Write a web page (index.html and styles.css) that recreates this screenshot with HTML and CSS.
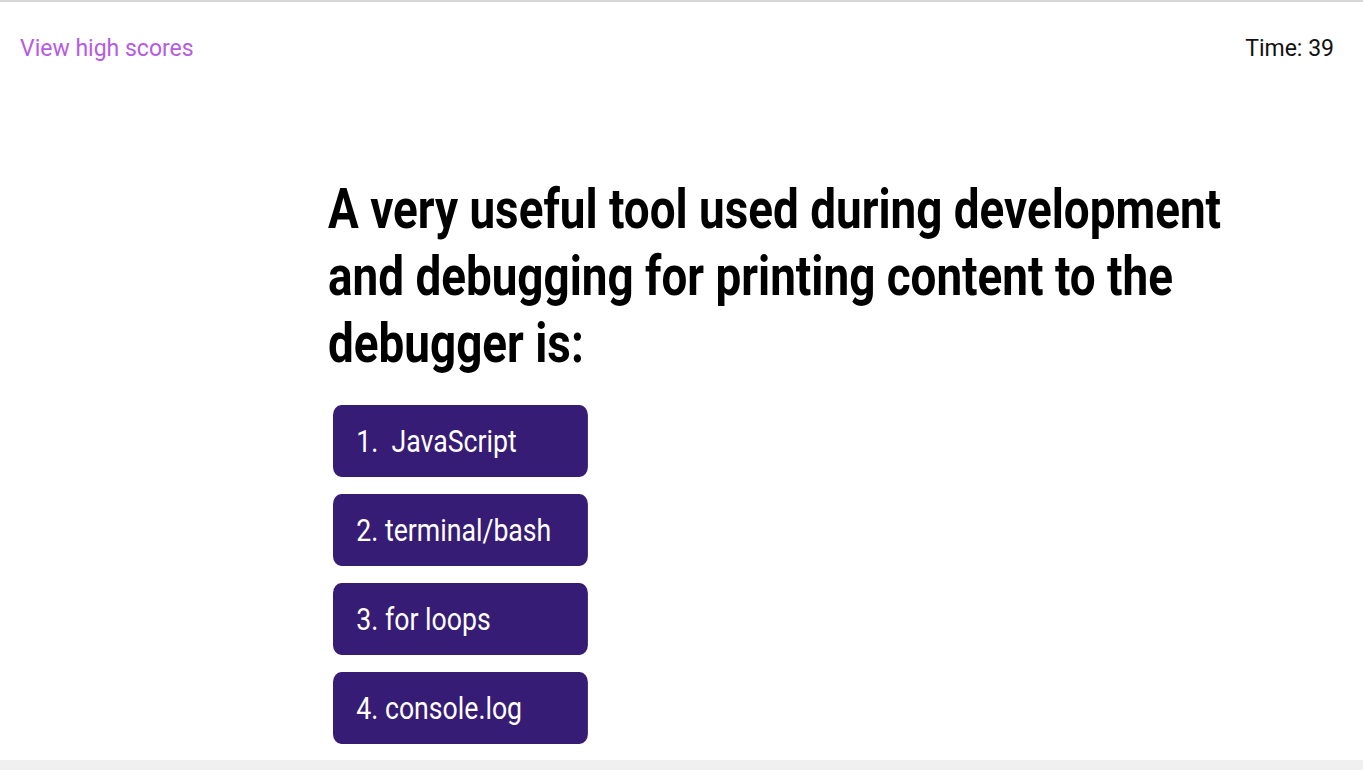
FILE: index.html
```html
<!DOCTYPE html>
<html lang="en">
<head>
<meta charset="utf-8">
<title>Code Quiz</title>
<link rel="stylesheet" href="styles.css">
</head>
<body>
<div class="page">
  <header class="topbar">
    <a class="scores-link" href="#">View high scores</a>
    <div class="timer">Time: 39</div>
  </header>
  <main class="quiz">
    <h1 class="question">A very useful tool used during development and debugging for printing content to the debugger is:</h1>
    <div class="answers">
      <button class="answer">1.&nbsp; JavaScript</button>
      <button class="answer">2. terminal/bash</button>
      <button class="answer">3. for loops</button>
      <button class="answer">4. console.log</button>
    </div>
  </main>
</div>
</body>
</html>
```

FILE: styles.css
```css
html {
  background: #f0f0f0;
}
html, body {
  margin: 0;
  padding: 0;
}
body {
  font-family: Roboto, "Liberation Sans", sans-serif;
  overflow: hidden;
  width: 1363px;
  height: 770px;
}
.page {
  width: 1363px;
  height: 760px;
  background: #ffffff;
  border-top: 2px solid #d6d6d6;
  box-sizing: border-box;
  overflow: hidden;
}
.topbar {
  display: flex;
  justify-content: space-between;
  align-items: flex-start;
  padding: 33px 29px 0 20px;
  font-size: 23px;
  line-height: 27px;
}
.scores-link {
  color: #b65ce4;
  text-decoration: none;
}
.timer {
  color: #111111;
}
.quiz {
  margin-left: 328px;
  width: 1128px;
  padding-top: 114px;
  transform: scaleX(0.833);
  transform-origin: 0 0;
}
.question {
  margin: 0;
  font-size: 55px;
  line-height: 67px;
  font-weight: 700;
  color: #000000;
}
.answers {
  display: flex;
  flex-direction: column;
  align-items: flex-start;
  gap: 17px;
  margin-top: 28px;
  margin-left: 6px;
}
.answer {
  width: 306px;
  height: 72px;
  background: #361c74;
  color: #ffffff;
  border: none;
  border-radius: 10px;
  font-family: Roboto, "Liberation Sans", sans-serif;
  font-size: 32px;
  text-align: left;
  padding: 0 0 0 28px;
  cursor: pointer;
}
```
